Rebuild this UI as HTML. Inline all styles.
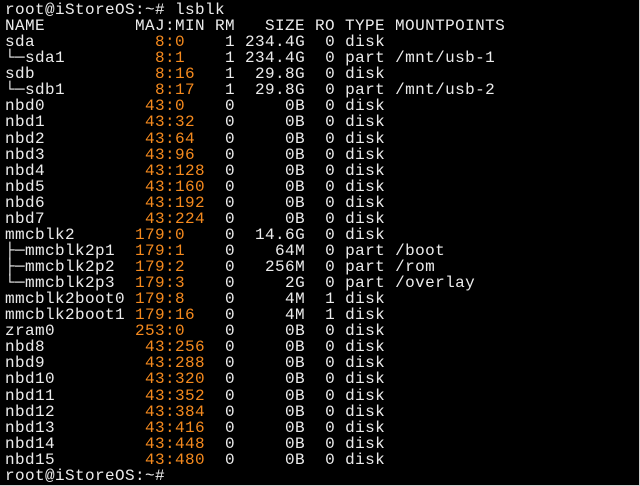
<!DOCTYPE html>
<html><head><meta charset="utf-8"><style>
html,body{margin:0;padding:0;background:#000;}
body{width:640px;height:486px;overflow:hidden;position:relative;box-sizing:border-box;border-right:1px solid #d0d0d0;border-bottom:1px solid #d0d0d0;}
.t{position:absolute;left:5px;top:2px;font-family:"Liberation Mono",monospace;font-size:16px;letter-spacing:0.4px;color:#ececec;}
.t div{height:16.07px;line-height:16.07px;white-space:pre;overflow:visible;}
b{font-weight:normal;color:#f58a1e;}
</style></head><body><div class="t">
<div>root@iStoreOS:~# lsblk</div>
<div>NAME         MAJ:MIN RM   SIZE RO TYPE MOUNTPOINTS</div>
<div>sda            <b>8:0</b>    1 234.4G  0 disk</div>
<div>└─sda1         <b>8:1</b>    1 234.4G  0 part /mnt/usb-1</div>
<div>sdb            <b>8:16</b>   1  29.8G  0 disk</div>
<div>└─sdb1         <b>8:17</b>   1  29.8G  0 part /mnt/usb-2</div>
<div>nbd0          <b>43:0</b>    0     0B  0 disk</div>
<div>nbd1          <b>43:32</b>   0     0B  0 disk</div>
<div>nbd2          <b>43:64</b>   0     0B  0 disk</div>
<div>nbd3          <b>43:96</b>   0     0B  0 disk</div>
<div>nbd4          <b>43:128</b>  0     0B  0 disk</div>
<div>nbd5          <b>43:160</b>  0     0B  0 disk</div>
<div>nbd6          <b>43:192</b>  0     0B  0 disk</div>
<div>nbd7          <b>43:224</b>  0     0B  0 disk</div>
<div>mmcblk2      <b>179:0</b>    0  14.6G  0 disk</div>
<div>├─mmcblk2p1  <b>179:1</b>    0    64M  0 part /boot</div>
<div>├─mmcblk2p2  <b>179:2</b>    0   256M  0 part /rom</div>
<div>└─mmcblk2p3  <b>179:3</b>    0     2G  0 part /overlay</div>
<div>mmcblk2boot0 <b>179:8</b>    0     4M  1 disk</div>
<div>mmcblk2boot1 <b>179:16</b>   0     4M  1 disk</div>
<div>zram0        <b>253:0</b>    0     0B  0 disk</div>
<div>nbd8          <b>43:256</b>  0     0B  0 disk</div>
<div>nbd9          <b>43:288</b>  0     0B  0 disk</div>
<div>nbd10         <b>43:320</b>  0     0B  0 disk</div>
<div>nbd11         <b>43:352</b>  0     0B  0 disk</div>
<div>nbd12         <b>43:384</b>  0     0B  0 disk</div>
<div>nbd13         <b>43:416</b>  0     0B  0 disk</div>
<div>nbd14         <b>43:448</b>  0     0B  0 disk</div>
<div>nbd15         <b>43:480</b>  0     0B  0 disk</div>
<div>root@iStoreOS:~# </div>
</div></body></html>
